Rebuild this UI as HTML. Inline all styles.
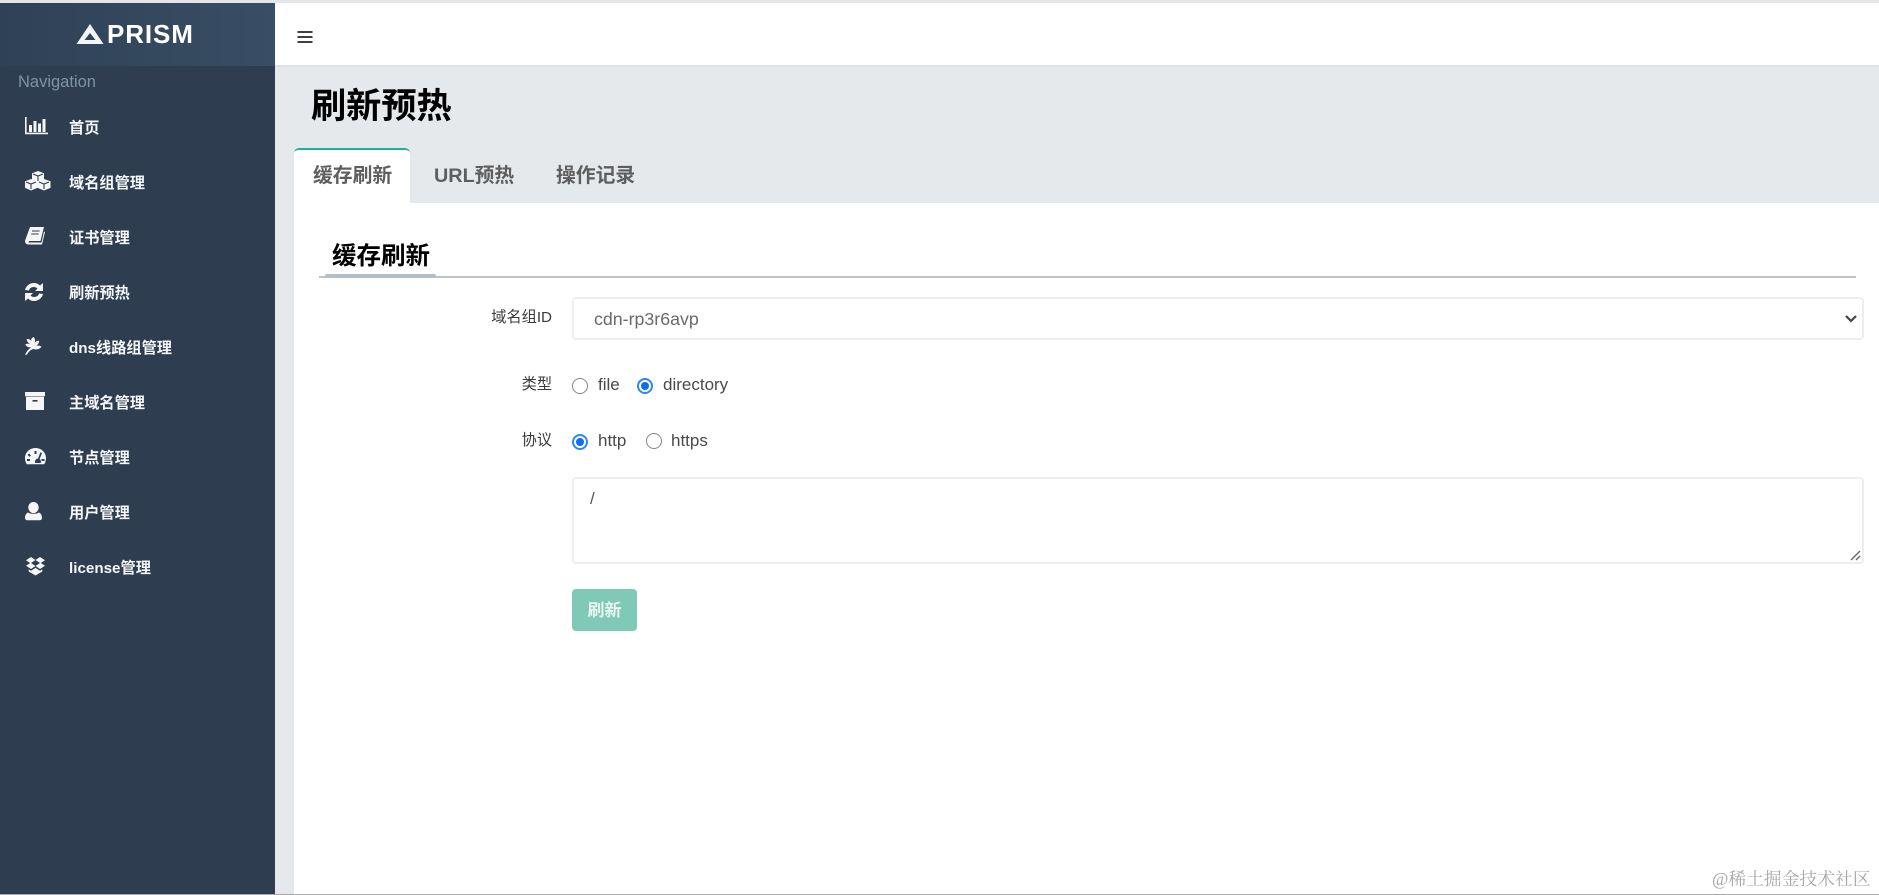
<!DOCTYPE html>
<html lang="zh"><head><meta charset="utf-8"><title>刷新预热</title>
<style>
*{box-sizing:border-box}
html,body{margin:0;padding:0;width:1879px;height:895px;overflow:hidden;background:#fff}
body{position:relative;font-family:"Liberation Sans","Noto Sans CJK SC",sans-serif}
.a{position:absolute;white-space:nowrap;line-height:1}
.nav{left:69px;font-size:15.200px;font-weight:700;color:#f4f6f7}
.tab{font-size:19.800px;font-weight:700;color:#5e5e5e;top:167px}
.lb{font-size:15.200px;color:#3a3a3a;text-align:right}
.t{font-size:17px;color:#4a4a4a}
.r{position:absolute;width:16px;height:16px;border-radius:50%;border:1.5px solid #858585;background:#fff}
.r.on{border:2px solid #2f87ef;background:#fff}
.r.on:after{content:"";position:absolute;left:2px;top:2px;width:8px;height:8px;border-radius:50%;background:#0b6ff0}
.box{position:absolute;background:#fff;border:2px solid #eceef0;border-radius:4px}
</style></head><body>
<div class="a" style="left:0;top:0;width:1879px;height:3px;background:#e3e5e7"></div>
<div class="a" style="left:0;top:3px;width:275px;height:892px;background:#2e3e50"></div>
<div class="a" style="left:0;top:3px;width:275px;height:63px;background:linear-gradient(90deg,#2f4156,#384e64)"></div>
<div class="a" style="left:275px;top:3px;width:1604px;height:64px;background:#fff;border-bottom:2px solid #dfe1e3"></div>
<div class="a" style="left:275px;top:67px;width:1604px;height:828px;background:#e6e9ec"></div>
<div class="a" style="left:294px;top:203px;width:1585px;height:692px;background:#fff"></div>

<div class="a" style="left:107px;top:21px;font-size:26px;font-weight:700;color:#fff;letter-spacing:.9px">PRISM</div>
<div class="a" style="left:18px;top:74px;font-size:16.500px;color:#7f92a8">Navigation</div>

<svg class="a" width="1879" height="600" style="left:0;top:0" viewBox="0 0 1879 600" fill="#f5f6f7">
<path fill-rule="evenodd" d="M90 24L103.500 44H76.500zM90 33l-5.500 7h11z"/>
<!-- bar chart -->
<path d="M25 117h1.600v15.600H48v1.600H25z"/>
<path d="M29 125h3v7h-3zM33.500 121h3v11h-3zM38 123.500h3v8.500h-3zM42.500 119h3v13h-3z"/>
<!-- cubes -->
<path d="M38 171l6 2.200v6.400l-6 2.400-6-2.400v-6.400zM31 179l6.500 2.300v6.600L31 190.500l-6-2.600v-6.600zM44 179l6.500 2.300v6.600L44 190.500l-6.500-2.600v-6.600z"/>
<path d="M33 174l5 2 5-2M38 176v5M26 182l5 2 5-2M31 184v5M39 182l5 2 5-2M44 184v5" fill="none" stroke="#2e3e50" stroke-width="1.100"/>
<!-- book -->
<path fill-rule="evenodd" d="M30 227h14l-3.500 14H30c-1.200 0-1.800 1-1.200 1.500h12.700l2.500-11 1 .5-3 12.500H28.500c-2.500 0-4-2-3.300-4.200zM32 230.500v1h7.500l.3-1zM31.300 233.500l-.3 1h7.500l.3-1z"/>
<!-- refresh -->
<path d="M25 290c1-4 4.500-7 9-7 2.500 0 4.500 1 6 2.500l3-2.500v8h-8l2.500-2.500c-1-1-2.200-1.500-3.500-1.500-3 0-4.500 1.500-5 3.500zM43 294c-1 4-4.500 7-9 7-2.500 0-4.500-1-6-2.500L25 301v-8h8l-2.500 2.500c1 1 2.200 1.500 3.500 1.500 3 0 4.500-1.500 5-3.500z"/>
<!-- leaf -->
<path d="M33.500 337c1.800 1.700 2 4 .8 6.300 1-1.700 2.500-2.500 4.700-2.700.2 2.500-1 4.300-3.700 5.400 2.200-.9 4.300-.6 6.200.7-1.600 2.400-4.700 3.400-8.200 2.300-3 .9-5 3-6 5.200l-2.300 1c1.200-3.300 3.200-5.800 6.300-7.800-2.900.3-5-1-6-3.200 1.800-.8 3.700-.6 5.400.4-2.300-1.400-3.900-3.200-4-5.600 2-.2 3.600.6 4.800 2-.6-1.500-.2-3 2-4z"/>
<!-- archive -->
<path fill-rule="evenodd" d="M25 392h20v4.300H25zM26 396.800h18v13.200H26zM32.500 400v1.600h5V400z"/>
<!-- dashboard -->
<path fill-rule="evenodd" d="M35.500 448c5.800 0 10.500 4.400 10.500 10 0 2.400-.7 4.400-1.800 6.300H26.800C25.700 462.400 25 460.400 25 458c0-5.600 4.700-10 10.500-10zM34.500 451v3h2v-3zM29 453.500l-1.400 1.400 2 2 1.400-1.400zM42 453l-1.600-.6-2.400 6.100c-1.500.1-3 1.500-3 3.200 0 .5.100 1 .3 1.300h5.300c.2-.3.400-.8.400-1.300 0-1.100-.7-2.100-1.400-2.600zM27 459v2h3v-2zM41.500 459v2h3v-2z"/>
<!-- user -->
<path d="M33.500 502c2.900 0 5.200 2.400 5.200 5.400s-2.300 5.800-5.200 5.800-5.200-2.800-5.200-5.800 2.300-5.400 5.200-5.400zM28.300 512.500c1.600 1.800 8.800 1.800 10.400 0 2.300.5 3.300 3.300 3.300 5.200 0 1.600-1 2.600-3 2.600H28c-2 0-3-1-3-2.600 0-1.900 1-4.700 3.300-5.200z"/>
<!-- dropbox -->
<path d="M31 557l4.500 3-4.500 3 4.500 3-4.500 3-5-3.200 4.200-2.800-4.200-2.800zM40 557l5 3.200-4.200 2.800 4.200 2.800-5 3.200-4.500-3 4.500-3-4.500-3zM31 570.800l4.500-2.900 4.500 2.900 2.300-1.400v2.100l-6.800 4-6.800-4v-2.100z"/>
<!-- hamburger -->
<path d="M297.500 31h15v2h-15zM297.500 36h15v2h-15zM297.500 41h15v2h-15z" fill="#3f3f3f"/>
</svg>

<div class="a nav" style="top:121px">首页</div>
<div class="a nav" style="top:176px">域名组管理</div>
<div class="a nav" style="top:231px">证书管理</div>
<div class="a nav" style="top:286px">刷新预热</div>
<div class="a nav" style="top:341px">dns线路组管理</div>
<div class="a nav" style="top:396px">主域名管理</div>
<div class="a nav" style="top:451px">节点管理</div>
<div class="a nav" style="top:506px">用户管理</div>
<div class="a nav" style="top:561px">license管理</div>

<div class="a" style="left:311px;top:89px;font-size:35.200px;font-weight:700;color:#000">刷新预热</div>

<div class="a" style="left:294px;top:148px;width:116px;height:55px;background:#fff;border-top:2px solid #1ab394;border-radius:5px 5px 0 0"></div>
<div class="a tab" style="left:313px">缓存刷新</div>
<div class="a tab" style="left:434px">URL预热</div>
<div class="a tab" style="left:556px">操作记录</div>

<div class="a" style="left:332px;top:245px;font-size:24.500px;font-weight:700;color:#000">缓存刷新</div>
<div class="a" style="left:319px;top:276px;width:1537px;height:2px;background:#bdc3c7"></div>
<div class="a" style="left:325px;top:274px;width:111px;height:4px;background:#b3c0cb;border-radius:2px 2px 0 0"></div>

<div class="a lb" style="left:452px;width:100px;top:310px">域名组ID</div>
<div class="box" style="left:572px;top:297px;width:1292px;height:43px"></div>
<div class="a" style="left:594px;top:311px;font-size:17.800px;color:#6a6a6a">cdn-rp3r6avp</div>
<svg class="a" style="left:1844px;top:313px" width="14" height="12" viewBox="0 0 14 12"><path d="M2 3l5 5 5-5" fill="none" stroke="#444" stroke-width="2.200"/></svg>

<div class="a lb" style="left:452px;width:100px;top:377px">类型</div>
<span class="r" style="left:572px;top:378px"></span>
<div class="a t" style="left:598px;top:376px">file</div>
<span class="r on" style="left:637px;top:378px"></span>
<div class="a t" style="left:663px;top:376px">directory</div>

<div class="a lb" style="left:452px;width:100px;top:433px">协议</div>
<span class="r on" style="left:572px;top:434px"></span>
<div class="a t" style="left:598px;top:432px">http</div>
<span class="r" style="left:646px;top:433px"></span>
<div class="a t" style="left:671px;top:432px">https</div>

<div class="box" style="left:572px;top:477px;width:1292px;height:87px"></div>
<div class="a" style="left:590px;top:490px;font-size:17px;color:#555">/</div>
<svg class="a" style="left:1850px;top:549px" width="12" height="12" viewBox="0 0 12 12"><path d="M1 11L10 2M6 11l4-4" stroke="#666" stroke-width="1.400" fill="none"/></svg>

<div class="a" style="left:572px;top:589px;width:65px;height:42px;background:#80c9b6;border-radius:4px;color:#e9f6f2;font-size:17px;font-weight:700;line-height:43px;text-align:center">刷新</div>

<div class="a" style="left:1712px;top:871px;font-size:17.800px;color:#a8a8a8;font-family:'Liberation Serif','Noto Serif CJK SC',serif">@稀土掘金技术社区</div>
<div class="a" style="left:0;top:894px;width:1879px;height:1px;background:#a9a9a9"></div>
</body></html>
